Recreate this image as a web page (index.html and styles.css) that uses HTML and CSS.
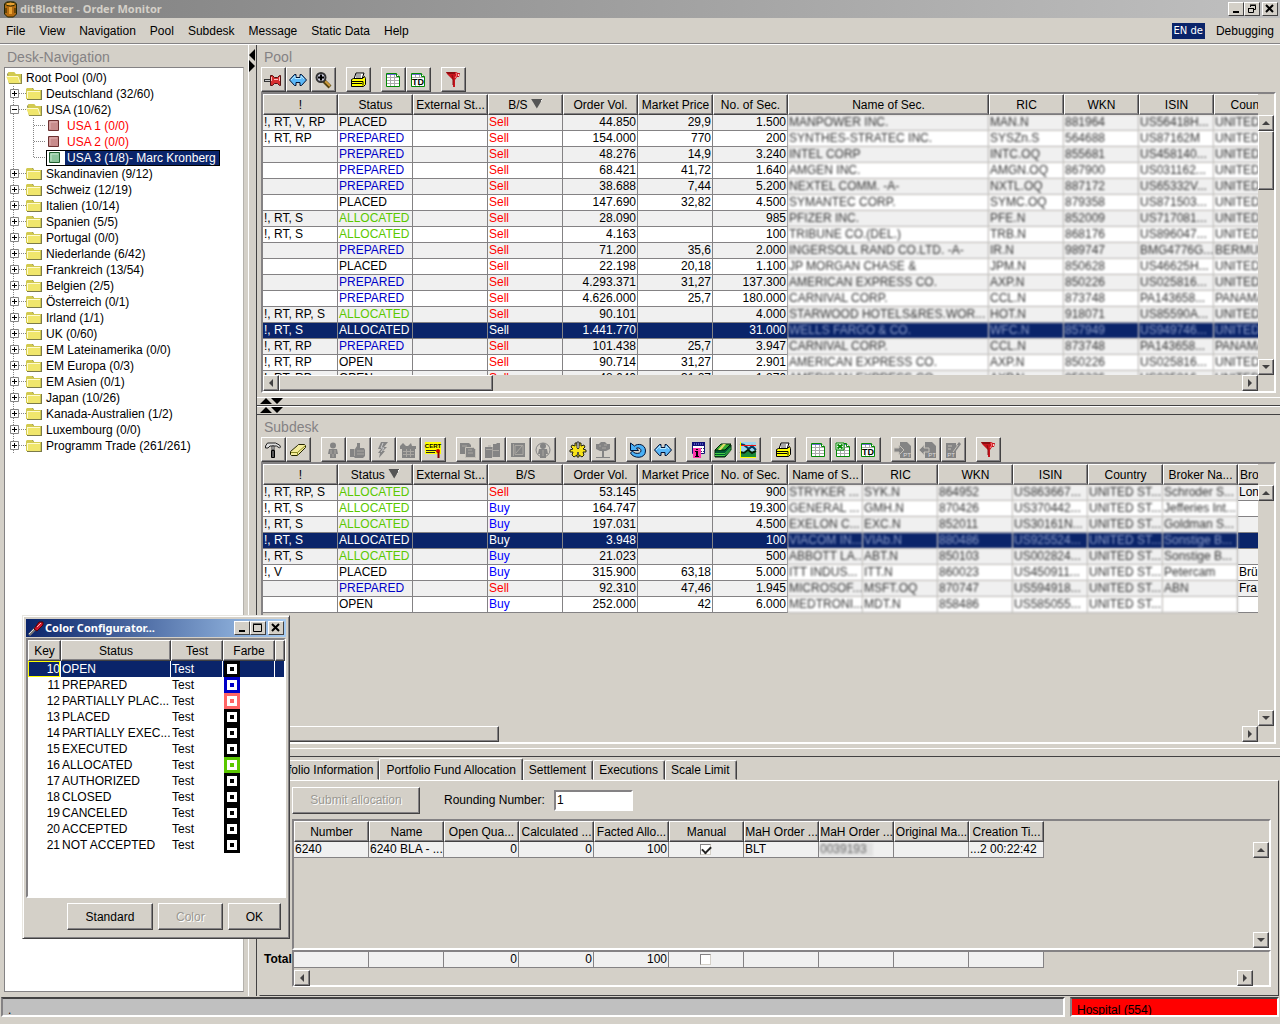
FILE: index.html
```html
<!DOCTYPE html>
<html lang="en">
<head>
<meta charset="utf-8">
<title>ditBlotter - Order Monitor</title>
<link rel="stylesheet" href="styles.css">
</head>
<body>
<svg class="defs" aria-hidden="true">
<defs>
<symbol id="i-pin" viewBox="0 0 18 18"><path d="M0 9.500h7" stroke="#333" stroke-width="3"/><path d="M1 9.500h6" stroke="#ccc"/><path d="M6.500 4.500h2l2 2h3l2-2h1v10h-1l-2-2h-3l-2 2h-2z" fill="#d83030" stroke="#511"/><path d="M7 6h1v4H7zM10 8h4v1h-4zM15 6h1v4h-1z" fill="#fbb"/></symbol>
<symbol id="i-arrows" viewBox="0 0 18 18"><path d="M0.500 9l5-5.500h1.500v3h4v-3h1.500l5 5.500-5 5.500H11v-3H7v3H5.500z" fill="#5cb8f8" stroke="#013"/><path d="M2 9l4-4v2.500h6V5l3 3" fill="none" stroke="#b8e8ff"/></symbol>
<symbol id="i-zoom" viewBox="0 0 18 18"><path d="M10 10l6 6" stroke="#541" stroke-width="4"/><path d="M11 10l5 5" stroke="#cc9a3c" stroke-width="2"/><circle cx="7" cy="6.500" r="4.500" fill="#ccd" stroke="#333" stroke-width="2"/><path d="M4 6.500h6M7 3.500v6" stroke="#000" stroke-width="2"/></symbol>
<symbol id="i-print" viewBox="0 0 18 18"><path d="M5 8l2-6h8l-2 6" fill="#fff" stroke="#000"/><path d="M7 4h5M7 6h5" stroke="#555"/><path d="M2.500 8.500l2-1h9l2-2 1 2v6l-2 2h-12z" fill="#ff0" stroke="#000"/><path d="M3 10.500h11v4M3 12.500h10" stroke="#000" fill="none"/></symbol>
<symbol id="i-sheet" viewBox="0 0 18 18"><path d="M2.500 2.500h10l3 3v10h-13z" fill="#fff" stroke="#080"/><path d="M3 6.500h12M3 9.500h12M3 12.500h12M6.500 3v12M10.500 3v12" stroke="#aaa"/><path d="M3 3.500h9" stroke="#66c"/><path d="M12.500 2.500v3h3" fill="#fff" stroke="#080"/></symbol>
<symbol id="i-td" viewBox="0 0 18 18"><use href="#i-sheet"/><path d="M3 7h12v7H3z" fill="#fff"/><text x="9" y="14" text-anchor="middle" font-size="9" font-weight="bold" font-family="Liberation Sans, sans-serif">TD</text></symbol>
<symbol id="i-xls" viewBox="0 0 18 18"><use href="#i-sheet"/><path d="M2 2h8v7H2z" fill="#fff" stroke="#080"/><path d="M3.500 3.500l5 4M8.500 3.500l-5 4" stroke="#080" stroke-width="2"/></symbol>
<symbol id="i-funnel" viewBox="0 0 18 18"><path d="M2 1h10l2 1h2l-1 4h-2l-2 3v7H9V9L3 3z" fill="#c8141c"/><path d="M2 1h9v2H4z" fill="#8c0c10"/><path d="M8 4l1 4v6" fill="none" stroke="#8c0c10"/><path d="M12 2l1 2-2 3" fill="none" stroke="#f88"/><path d="M14 3h1v2h-1z" fill="#fcc"/></symbol>
<symbol id="i-hammer" viewBox="0 0 18 18"><path d="M1.500 5l2-3h8l4 2 1 2-1 1-3-2H6L4 7H1.500z" fill="#ddd" stroke="#222"/><path d="M8 5h2v4H8z" fill="#eee" stroke="#333"/><path d="M7.500 9.500h3v7h-3z" fill="#555" stroke="#000"/></symbol>
<symbol id="i-eraser" viewBox="0 0 18 18"><path d="M1.500 10.500l7-6 1-1h6l1 1v2l-7 7-1 1h-6l-1-1z" fill="#f4ec9c" stroke="#220"/><path d="M2 11.500h6.500l8-7M8.500 11.500v3" stroke="#882" fill="none"/></symbol>
<symbol id="i-person" viewBox="0 0 18 18"><circle cx="9" cy="4.500" r="3"/><path d="M5 8h8l1 5h-2v4H6v-4H4z"/><path d="M7 9v4M11 9v4M9 13v3" stroke="#aaa7a2"/></symbol>
<symbol id="i-thumb" viewBox="0 0 18 18"><path d="M1 8h5l2-3V2h3v5h4l1 2v6l-2 2H6l-1-1H1z"/><path d="M5.500 8v7M8 10h7M8 13h7" stroke="#aaa7a2" fill="none"/></symbol>
<symbol id="i-bolt" viewBox="0 0 18 18"><path d="M7 1h7l-4 5h3l-4 4h2l-6 7 1-5H4l3-4H4z"/><path d="M9 2L7 7h3l-3 4" stroke="#ccc" fill="none"/></symbol>
<symbol id="i-factory" viewBox="0 0 18 18"><path d="M1 5l3-3 3 3h2l3-3 1 3h4v3h-1v9H3V8H1z"/><path d="M4 10.500h11M4 13.500h11M7.500 8v8M11.500 8v8" stroke="#aaa7a2"/></symbol>
<symbol id="i-cert" viewBox="0 0 18 18"><path d="M1 1h16v12H1z" fill="#ff0"/><text x="9" y="7" text-anchor="middle" font-size="6" font-weight="bold" fill="#000" font-family="Liberation Sans, sans-serif">CERT</text><path d="M2 9.500h10M2 11.500h9" stroke="#222"/><circle cx="14" cy="10" r="2" fill="#c00"/><path d="M14.500 11v6" stroke="#800" stroke-width="2"/></symbol>
<symbol id="i-copy" viewBox="0 0 18 18"><path d="M1 2h9l2 2v9H1z"/><path d="M6.500 6.500h8l2 2v8h-10z" stroke="#c4c0b8"/><path d="M3 5h5M9 9h4M9 12h5" stroke="#aaa7a2"/></symbol>
<symbol id="i-cases" viewBox="0 0 18 18"><path d="M1 6h8V3h3l1-1h3v14H8v1H1z"/><path d="M2 8.500h6M8.500 6v10M9 9.500h6M4 5h3" stroke="#aaa7a2"/></symbol>
<symbol id="i-book" viewBox="0 0 18 18"><path d="M2 2h14v14H2z"/><path d="M4.500 3v12M6 4.500h8v9H6zM7 12l6-7" stroke="#aaa7a2" fill="none"/></symbol>
<symbol id="i-globe" viewBox="0 0 18 18"><circle cx="9" cy="9" r="7" fill="none" stroke="#848484"/><circle cx="9" cy="5" r="3"/><path d="M5 8h8l1 5h-2v4H6v-4H4z"/><path d="M9 9v6" stroke="#aaa7a2"/></symbol>
<symbol id="i-gear" viewBox="0 0 18 18"><path d="M6 2h2v3h2V2h2v3l3-1 1 2-2 2 3 1v2l-3 0 1 3-2 2-3-2v2H8v-2l-3 2-2-2 1-3H1V9l3-1-2-2 1-2 3 1z" fill="#f8e418" stroke="#221"/><path d="M8 1h2v6l-1 1-1-1z" fill="#fff" stroke="#333"/><path d="M8 11h2v3H8z" fill="#554"/></symbol>
<symbol id="i-tree" viewBox="0 0 18 18"><path d="M7 1h4l2 2h3v5l-4 2H6L2 8V3h3z"/><path d="M8 10h2v6h6v1H2v-1h6z"/><path d="M5 5h2M10 4h3M8 7h4" stroke="#aaa7a2"/></symbol>
<symbol id="i-undo" viewBox="0 0 18 18"><path d="M1.500 2v7.500h8L7.500 7c4-1 6 3 3 5-3 1-6 0-7-2l-2 2c3 6 15 6 15-2 0-7-8-8-11-5z" fill="#4ab0f6" stroke="#013"/></symbol>
<symbol id="i-info" viewBox="0 0 18 18"><path d="M3.500 1.500h12v11h-12z" fill="#fff" stroke="#117"/><path d="M3 1h13v4H3z" fill="#117"/><path d="M5 3h9" stroke="#99f" stroke-dasharray="1 1"/><path d="M5 7.500h10M5 10.500h10" stroke="#336" stroke-dasharray="2 1"/><path d="M4 7h8v10H4z" fill="#f3a"/><path d="M7 8h2v1H7zM6 10h3v5h1v1H6v-1h1v-4H6z"/></symbol>
<symbol id="i-money" viewBox="0 0 18 18"><path d="M1 9l6-5h10v5l-6 7H1z" fill="#053" stroke="#020"/><path d="M1 12.500h10l6-6M1 14.500h10l6-6" stroke="#4c4" fill="none"/><path d="M7 3h10l-6 6H1z" fill="#3a3" stroke="#020"/><path d="M9 3l3 0-5 6H4z" fill="#dd6"/></symbol>
<symbol id="i-chart" viewBox="0 0 18 18"><path d="M1 1h16v15H1z" fill="#9cd4ec"/><path d="M1 11l4 2 4-3 4 3 4-2v5H1z" fill="#1a8a3a"/><path d="M1 3l4 1 5 4 3-3 4 4" fill="none" stroke="#013a60" stroke-width="2"/><path d="M1 11l4 1 4-3 4 3 4-2" fill="none" stroke="#020" stroke-width="2"/><path d="M1 4.500h16" stroke="#e11"/><path d="M1.500 1v15.500H17" stroke="#ff0" fill="none"/></symbol>
<symbol id="i-ptin" viewBox="0 0 18 18"><path d="M6 1h7l4 4v12H6z"/><path d="M0 7h5V4l5 5-5 5v-3H0z" stroke="#c4c0b8"/><text x="13" y="16" text-anchor="middle" font-size="6" fill="#ddd" font-family="Liberation Sans, sans-serif">PT</text></symbol>
<symbol id="i-ptout" viewBox="0 0 18 18"><path d="M6 1h7l4 4v12H6z"/><path d="M10 7H5V4L0 9l5 5v-3h5z" stroke="#c4c0b8"/><text x="13" y="16" text-anchor="middle" font-size="6" fill="#ddd" font-family="Liberation Sans, sans-serif">PT</text></symbol>
<symbol id="i-ptedit" viewBox="0 0 18 18"><path d="M2 2h10v3l3-4 2 2-5 7v7H2z"/><path d="M4 5h4M4 8h3M14 4l-5 7" stroke="#c4c0b8"/><text x="7" y="16" text-anchor="middle" font-size="6" fill="#ddd" font-family="Liberation Sans, sans-serif">PT</text></symbol>
<symbol id="i-plus" viewBox="0 0 20 16"><path d="M7.500 0v16M13 7.500h7" stroke="#848484" stroke-dasharray="1 1"/><path d="M4.500 3.500h8v8h-8z" fill="#fff" stroke="#848484"/><path d="M6 7.500h5M8.500 5v5" stroke="#000"/></symbol>
<symbol id="i-minus" viewBox="0 0 20 16"><path d="M7.500 0v16M13 7.500h7" stroke="#848484" stroke-dasharray="1 1"/><path d="M4.500 3.500h8v8h-8z" fill="#fff" stroke="#848484"/><path d="M6 7.500h5" stroke="#000"/></symbol>
<symbol id="i-line" viewBox="0 0 20 16"><path d="M7.500 0v16" stroke="#848484" stroke-dasharray="1 1"/></symbol>
<symbol id="i-branch" viewBox="0 0 20 16"><path d="M7.500 0v16M8 7.500h12" stroke="#848484" stroke-dasharray="1 1"/></symbol>
<symbol id="i-corner" viewBox="0 0 20 16"><path d="M7.500 0v8M8 7.500h12" stroke="#848484" stroke-dasharray="1 1"/></symbol>
<symbol id="i-folder" viewBox="0 0 16 16"><path d="M1 4l1-2h5l1 2h8v10H1z" fill="#7b7a4a"/><path d="M0 3l1-1h5l2 2h7v9H0z" fill="#d2ca50"/><path d="M1 5h13v8H1z" fill="#f0e66c"/><path d="M1 5.500h13M1.500 5v7" stroke="#fffbd0"/></symbol>
<symbol id="i-open" viewBox="0 0 16 16"><path d="M1 4l2-2h5l1 2h7v10H3z" fill="#8b8a4a"/><path d="M2 3l1-1h5l2 2h5v9H3z" fill="#d2ca50"/><path d="M0 6h12l2 7H3z" fill="#f0e66c"/><path d="M0 6.500h12l2 6" fill="none" stroke="#fffbd0"/></symbol>
<symbol id="i-red" viewBox="0 0 18 14"><path d="M1.500 1.500h10v10h-10z" fill="#c88c8c" stroke="#6b3030"/><path d="M3 3h7M3 3v7" stroke="#e2b4b4"/></symbol>
<symbol id="i-green" viewBox="0 0 18 14"><path d="M2.500 1.500h10v10h-10z" fill="#8cc49c" stroke="#206030"/><path d="M4 3h7M4 3v7" stroke="#c4e6cc"/></symbol>
<symbol id="i-pair" viewBox="0 0 24 7"><path d="M0 6l6-6 6 6zM11 0h12l-6 6z"/></symbol>
</defs>
</svg>

<header class="titlebar">
<svg width="18" height="18" viewBox="0 0 18 18"><path d="M3.500 4l2-2h8l2 2v10l-3 3h-6l-3-3z" fill="#b26a10" stroke="#220"/><ellipse cx="9.500" cy="4" rx="5" ry="2" fill="#e8a030" stroke="#220"/><path d="M5 8v5M14 8v5" stroke="#220"/><path d="M8 7h3v7H8z" fill="#e8a030"/></svg>
<h1>ditBlotter - Order Monitor</h1>
<div class="winbtns">
<button aria-label="Minimize"><svg width="12" height="10"><path d="M3 8h6" stroke="#000" stroke-width="2"/></svg></button><button aria-label="Restore"><svg width="12" height="10"><path d="M4.500 3V1.500h5v4H8M4 1h6M2.500 4.500h5v4h-5zM2 4.500h6" fill="none" stroke="#000"/></svg></button><button class="close" aria-label="Close"><svg width="12" height="10"><path d="M2 1l7 7M9 1L2 8" stroke="#000" stroke-width="2"/></svg></button>
</div>
</header>

<nav class="menubar">
<button>File</button><button>View</button><button>Navigation</button><button>Pool</button><button>Subdesk</button><button>Message</button><button>Static Data</button><button>Help</button>
<button class="lang">EN de</button><button class="debug">Debugging</button>
</nav>

<main class="work">
<section class="desk">
<h2>Desk-Navigation</h2>
<ul class="tree">
<li><svg class="ic16"><use href="#i-open"/></svg><span>Root Pool (0/0)</span></li>
<li><button aria-label="Expand"><svg><use href="#i-plus"/></svg></button><svg class="ic16"><use href="#i-folder"/></svg><span>Deutschland (32/60)</span></li>
<li><button aria-label="Collapse"><svg><use href="#i-minus"/></svg></button><svg class="ic16"><use href="#i-open"/></svg><span>USA (10/62)</span></li>
<li class="leaf"><svg class="guide"><use href="#i-line"/></svg><svg class="guide"><use href="#i-branch"/></svg><a href="#usa1"><svg><use href="#i-red"/></svg><b>USA 1 (0/0)</b></a></li>
<li class="leaf"><svg class="guide"><use href="#i-line"/></svg><svg class="guide"><use href="#i-branch"/></svg><a href="#usa2"><svg><use href="#i-red"/></svg><b>USA 2 (0/0)</b></a></li>
<li class="leaf"><svg class="guide"><use href="#i-line"/></svg><svg class="guide"><use href="#i-corner"/></svg><a class="current" href="#usa3"><svg><use href="#i-green"/></svg><b>USA 3 (1/8)- Marc Kronberg</b></a></li>
<li><button aria-label="Expand"><svg><use href="#i-plus"/></svg></button><svg class="ic16"><use href="#i-folder"/></svg><span>Skandinavien (9/12)</span></li>
<li><button aria-label="Expand"><svg><use href="#i-plus"/></svg></button><svg class="ic16"><use href="#i-folder"/></svg><span>Schweiz (12/19)</span></li>
<li><button aria-label="Expand"><svg><use href="#i-plus"/></svg></button><svg class="ic16"><use href="#i-folder"/></svg><span>Italien (10/14)</span></li>
<li><button aria-label="Expand"><svg><use href="#i-plus"/></svg></button><svg class="ic16"><use href="#i-folder"/></svg><span>Spanien (5/5)</span></li>
<li><button aria-label="Expand"><svg><use href="#i-plus"/></svg></button><svg class="ic16"><use href="#i-folder"/></svg><span>Portugal (0/0)</span></li>
<li><button aria-label="Expand"><svg><use href="#i-plus"/></svg></button><svg class="ic16"><use href="#i-folder"/></svg><span>Niederlande (6/42)</span></li>
<li><button aria-label="Expand"><svg><use href="#i-plus"/></svg></button><svg class="ic16"><use href="#i-folder"/></svg><span>Frankreich (13/54)</span></li>
<li><button aria-label="Expand"><svg><use href="#i-plus"/></svg></button><svg class="ic16"><use href="#i-folder"/></svg><span>Belgien (2/5)</span></li>
<li><button aria-label="Expand"><svg><use href="#i-plus"/></svg></button><svg class="ic16"><use href="#i-folder"/></svg><span>Österreich (0/1)</span></li>
<li><button aria-label="Expand"><svg><use href="#i-plus"/></svg></button><svg class="ic16"><use href="#i-folder"/></svg><span>Irland (1/1)</span></li>
<li><button aria-label="Expand"><svg><use href="#i-plus"/></svg></button><svg class="ic16"><use href="#i-folder"/></svg><span>UK (0/60)</span></li>
<li><button aria-label="Expand"><svg><use href="#i-plus"/></svg></button><svg class="ic16"><use href="#i-folder"/></svg><span>EM Lateinamerika (0/0)</span></li>
<li><button aria-label="Expand"><svg><use href="#i-plus"/></svg></button><svg class="ic16"><use href="#i-folder"/></svg><span>EM Europa (0/3)</span></li>
<li><button aria-label="Expand"><svg><use href="#i-plus"/></svg></button><svg class="ic16"><use href="#i-folder"/></svg><span>EM Asien (0/1)</span></li>
<li><button aria-label="Expand"><svg><use href="#i-plus"/></svg></button><svg class="ic16"><use href="#i-folder"/></svg><span>Japan (10/26)</span></li>
<li><button aria-label="Expand"><svg><use href="#i-plus"/></svg></button><svg class="ic16"><use href="#i-folder"/></svg><span>Kanada-Australien (1/2)</span></li>
<li><button aria-label="Expand"><svg><use href="#i-plus"/></svg></button><svg class="ic16"><use href="#i-folder"/></svg><span>Luxembourg (0/0)</span></li>
<li><button aria-label="Expand"><svg><use href="#i-plus"/></svg></button><svg class="ic16"><use href="#i-folder"/></svg><span>Programm Trade (261/261)</span></li>
</ul>
</section>
<div class="vsplit"><svg width="7" height="24"><path d="M6 0v12L0 6zM0 11v12l6-6z"/></svg></div>

<div class="right">
<section class="pane">
<h2>Pool</h2>
<div class="toolbar">
<div><button aria-label="Pin"><svg><use href="#i-pin"/></svg></button><button aria-label="Fit"><svg><use href="#i-arrows"/></svg></button><button aria-label="Zoom"><svg><use href="#i-zoom"/></svg></button></div>
<div><button aria-label="Print"><svg><use href="#i-print"/></svg></button></div>
<div><button aria-label="Table"><svg><use href="#i-sheet"/></svg></button><button aria-label="Table details"><svg><use href="#i-td"/></svg></button></div>
<div><button aria-label="Filter"><svg><use href="#i-funnel"/></svg></button></div>
</div>
<div class="box">
<div class="view">
<table class="orders pool">
<colgroup><col span="7"><col class="wide"><col span="4"></colgroup>
<thead><tr><th>!<th>Status<th>External St...<th>B/S <i class="sort"></i><th>Order Vol.<th>Market Price<th>No. of Sec.<th>Name of Sec.<th>RIC<th>WKN<th>ISIN<th>Country</tr></thead>
<tbody>
<tr><td>!, RT, V, RP<td>PLACED<td><td class="s">Sell<td>44.850<td>29,9<td>1.500<td>MANPOWER INC.<td>MAN.N<td>881964<td>US56418H...<td>UNITED
<tr><td>!, RT, RP<td class="p">PREPARED<td><td class="s">Sell<td>154.000<td>770<td>200<td>SYNTHES-STRATEC INC.<td>SYSZn.S<td>564688<td>US87162M<td>UNITED
<tr><td><td class="p">PREPARED<td><td class="s">Sell<td>48.276<td>14,9<td>3.240<td>INTEL CORP<td>INTC.OQ<td>855681<td>US458140...<td>UNITED
<tr><td><td class="p">PREPARED<td><td class="s">Sell<td>68.421<td>41,72<td>1.640<td>AMGEN INC.<td>AMGN.OQ<td>867900<td>US031162...<td>UNITED
<tr><td><td class="p">PREPARED<td><td class="s">Sell<td>38.688<td>7,44<td>5.200<td>NEXTEL COMM. -A-<td>NXTL.OQ<td>887172<td>US65332V...<td>UNITED
<tr><td><td>PLACED<td><td class="s">Sell<td>147.690<td>32,82<td>4.500<td>SYMANTEC CORP.<td>SYMC.OQ<td>879358<td>US871503...<td>UNITED
<tr><td>!, RT, S<td class="a">ALLOCATED<td><td class="s">Sell<td>28.090<td><td>985<td>PFIZER INC.<td>PFE.N<td>852009<td>US717081...<td>UNITED
<tr><td>!, RT, S<td class="a">ALLOCATED<td><td class="s">Sell<td>4.163<td><td>100<td>TRIBUNE CO.(DEL.)<td>TRB.N<td>868176<td>US896047...<td>UNITED
<tr><td><td class="p">PREPARED<td><td class="s">Sell<td>71.200<td>35,6<td>2.000<td>INGERSOLL RAND CO.LTD. -A-<td>IR.N<td>989747<td>BMG4776G...<td>BERMUDA
<tr><td><td>PLACED<td><td class="s">Sell<td>22.198<td>20,18<td>1.100<td>JP MORGAN CHASE &amp;<td>JPM.N<td>850628<td>US46625H...<td>UNITED
<tr><td><td class="p">PREPARED<td><td class="s">Sell<td>4.293.371<td>31,27<td>137.300<td>AMERICAN EXPRESS CO.<td>AXP.N<td>850226<td>US025816...<td>UNITED
<tr><td><td class="p">PREPARED<td><td class="s">Sell<td>4.626.000<td>25,7<td>180.000<td>CARNIVAL CORP.<td>CCL.N<td>873748<td>PA143658...<td>PANAMA
<tr><td>!, RT, RP, S<td class="a">ALLOCATED<td><td class="s">Sell<td>90.101<td><td>4.000<td>STARWOOD HOTELS&amp;RES.WOR...<td>HOT.N<td>918071<td>US85590A...<td>UNITED
<tr class="sel"><td>!, RT, S<td>ALLOCATED<td><td>Sell<td>1.441.770<td><td>31.000<td>WELLS FARGO &amp; CO.<td>WFC.N<td>857949<td>US949746...<td>UNITED
<tr><td>!, RT, RP<td class="p">PREPARED<td><td class="s">Sell<td>101.438<td>25,7<td>3.947<td>CARNIVAL CORP.<td>CCL.N<td>873748<td>PA143658...<td>PANAMA
<tr><td>!, RT, RP<td>OPEN<td><td class="s">Sell<td>90.714<td>31,27<td>2.901<td>AMERICAN EXPRESS CO.<td>AXP.N<td>850226<td>US025816...<td>UNITED
<tr><td>!, RT, RP<td>OPEN<td><td class="s">Sell<td>48.640<td>31,27<td>1.876<td>AMERICAN EXPRESS CO.<td>AXP.N<td>850226<td>US025816...<td>UNITED
</tbody></table>
</div>
<div class="vbar"><button class="up" aria-label="Scroll up"></button><span class="thumb tall"></span><button class="down" aria-label="Scroll down"></button></div>
<div class="hbar"><button class="left" aria-label="Scroll left"></button><span class="thumb mid"></span><button class="rt" aria-label="Scroll right"></button></div>
</div>
</section>
<div class="hsplit"><svg><use href="#i-pair"/></svg></div>
<div class="hsplit"><svg><use href="#i-pair"/></svg></div>
<section class="pane">
<h2>Subdesk</h2>
<div class="toolbar">
<div><button aria-label="Tools"><svg><use href="#i-hammer"/></svg></button><button aria-label="Erase"><svg><use href="#i-eraser"/></svg></button></div>
<div><button disabled aria-label="Assign"><svg><use href="#i-person"/></svg></button><button disabled aria-label="Approve"><svg><use href="#i-thumb"/></svg></button><button disabled aria-label="Execute"><svg><use href="#i-bolt"/></svg></button><button disabled aria-label="Broker"><svg><use href="#i-factory"/></svg></button><button aria-label="Certificate"><svg><use href="#i-cert"/></svg></button></div>
<div><button disabled aria-label="Copy"><svg><use href="#i-copy"/></svg></button><button disabled aria-label="Cases"><svg><use href="#i-cases"/></svg></button><button disabled aria-label="Book"><svg><use href="#i-book"/></svg></button><button disabled aria-label="Trader"><svg><use href="#i-globe"/></svg></button></div>
<div><button aria-label="Settings"><svg><use href="#i-gear"/></svg></button><button disabled aria-label="Tree"><svg><use href="#i-tree"/></svg></button></div>
<div><button aria-label="Undo"><svg><use href="#i-undo"/></svg></button><button aria-label="Fit"><svg><use href="#i-arrows"/></svg></button></div>
<div><button aria-label="Information"><svg><use href="#i-info"/></svg></button><button aria-label="Money"><svg><use href="#i-money"/></svg></button><button aria-label="Chart"><svg><use href="#i-chart"/></svg></button></div>
<div><button aria-label="Print"><svg><use href="#i-print"/></svg></button></div>
<div><button aria-label="Table"><svg><use href="#i-sheet"/></svg></button><button aria-label="Excel"><svg><use href="#i-xls"/></svg></button><button aria-label="Table details"><svg><use href="#i-td"/></svg></button></div>
<div><button disabled aria-label="PT in"><svg><use href="#i-ptin"/></svg></button><button disabled aria-label="PT out"><svg><use href="#i-ptout"/></svg></button><button disabled aria-label="PT edit"><svg><use href="#i-ptedit"/></svg></button></div>
<div><button aria-label="Filter"><svg><use href="#i-funnel"/></svg></button></div>
</div>
<div class="box">
<div class="view">
<table class="orders sub">
<colgroup><col span="14"></colgroup>
<thead><tr><th>!<th>Status <i class="sort"></i><th>External St...<th>B/S<th>Order Vol.<th>Market Price<th>No. of Sec.<th>Name of S...<th>RIC<th>WKN<th>ISIN<th>Country<th>Broker Na...<th class="cut">Bro</tr></thead>
<tbody>
<tr><td>!, RT, RP, S<td class="a">ALLOCATED<td><td class="s">Sell<td>53.145<td><td>900<td>STRYKER ...<td>SYK.N<td>864952<td>US863667...<td>UNITED ST...<td>Schroder S...<td>Lon
<tr><td>!, RT, S<td class="a">ALLOCATED<td><td class="b">Buy<td>164.747<td><td>19.300<td>GENERAL ...<td>GMH.N<td>870426<td>US370442...<td>UNITED ST...<td>Jefferies Int...<td>
<tr><td>!, RT, S<td class="a">ALLOCATED<td><td class="b">Buy<td>197.031<td><td>4.500<td>EXELON C...<td>EXC.N<td>852011<td>US30161N...<td>UNITED ST...<td>Goldman S...<td>
<tr class="sel"><td>!, RT, S<td>ALLOCATED<td><td>Buy<td>3.948<td><td>100<td>VIACOM IN...<td>VIAb.N<td>880486<td>US925524...<td>UNITED ST...<td>Sonstige B...<td>
<tr><td>!, RT, S<td class="a">ALLOCATED<td><td class="b">Buy<td>21.023<td><td>500<td>ABBOTT LA...<td>ABT.N<td>850103<td>US002824...<td>UNITED ST...<td>Sonstige B...<td>
<tr><td>!, V<td>PLACED<td><td class="b">Buy<td>315.900<td>63,18<td>5.000<td>ITT INDUS...<td>ITT.N<td>860023<td>US450911...<td>UNITED ST...<td>Petercam<td>Brü
<tr><td><td class="p">PREPARED<td><td class="s">Sell<td>92.310<td>47,46<td>1.945<td>MICROSOF...<td>MSFT.OQ<td>870747<td>US594918...<td>UNITED ST...<td>ABN<td>Fra
<tr><td><td>OPEN<td><td class="b">Buy<td>252.000<td>42<td>6.000<td>MEDTRONI...<td>MDT.N<td>858486<td>US585055...<td>UNITED ST...<td><td>
</tbody></table>
</div>
<div class="vbar"><button class="up" aria-label="Scroll up"></button><button class="down" aria-label="Scroll down"></button></div>
<div class="hbar"><button class="left" aria-label="Scroll left"></button><span class="thumb long"></span><button class="rt" aria-label="Scroll right"></button></div>
</div>
</section>
<div class="hsplit"></div>
<section class="details">
<div class="tabs" role="tablist"><button role="tab">Portfolio Information</button><button role="tab" aria-selected="true">Portfolio Fund Allocation</button><button role="tab">Settlement</button><button role="tab">Executions</button><button role="tab">Scale Limit</button></div>
<div class="tabpanel">
<div class="form"><button class="push" disabled>Submit allocation</button><label for="round">Rounding Number:</label><input id="round" type="text" value="1"></div>
<div class="box alloc">
<div class="view">
<table class="orders">
<colgroup><col span="10"></colgroup>
<thead><tr><th>Number<th>Name<th>Open Qua...<th>Calculated ...<th>Facted Allo...<th>Manual<th>MaH Order ...<th>MaH Order ...<th>Original Ma...<th>Creation Ti...</tr></thead>
<tbody><tr><td>6240<td>6240 BLA - ...<td class="n">0<td class="n">0<td class="n">100<td class="c"><input type="checkbox" checked aria-label="Manual"><td>BLT<td class="veil"><span>0039193</span><td><td>...2 00:22:42</tbody>
</table>
</div>
<div class="vbar"><button class="up" aria-label="Scroll up"></button><button class="down" aria-label="Scroll down"></button></div>
</div>
<strong>Total</strong>
<div class="box total">
<div class="view">
<table class="orders">
<colgroup><col span="10"></colgroup>
<tbody><tr><td><td><td class="n">0<td class="n">0<td class="n">100<td class="c"><input type="checkbox" aria-label="Manual total"><td><td><td><td></tbody>
</table>
</div>
<div class="hbar"><button class="left" aria-label="Scroll left"></button><button class="rt" aria-label="Scroll right"></button></div>
</div>
</div>
</section>
</div>
</main>

<footer class="status"><div class="msg">.</div><div class="alert">Hospital (554)</div></footer>

<section class="dialog" role="dialog" aria-label="Color Configurator">
<header>
<svg width="16" height="16"><path d="M1 15l7-7" stroke="#777" stroke-width="3"/><path d="M1 14l7-7" stroke="#ddd"/><path d="M6 9l5-7 4 0 0 3-6 6z" fill="#d01830" stroke="#500"/><path d="M9 7l4-4" stroke="#fbb"/></svg>
<h2>Color Configurator...</h2>
<div class="winbtns">
<button aria-label="Minimize"><svg width="12" height="10"><path d="M3 8h6" stroke="#000" stroke-width="2"/></svg></button><button aria-label="Maximize"><svg width="12" height="10"><path d="M1.500 1.500h8v7h-8zM1 1h9" fill="none" stroke="#000"/></svg></button><button class="close" aria-label="Close"><svg width="12" height="10"><path d="M2 1l7 7M9 1L2 8" stroke="#000" stroke-width="2"/></svg></button>
</div>
</header>
<div class="colors">
<table>
<colgroup><col class="k"><col class="st"><col class="te"><col class="te"><col></colgroup>
<thead><tr><th>Key<th>Status<th>Test<th>Farbe<th></tr></thead>
<tbody>
<tr class="sel"><td>10<td>OPEN<td>Test<td><i></i><td>
<tr><td>11<td>PREPARED<td>Test<td><i class="blue"></i><td>
<tr><td>12<td>PARTIALLY PLAC...<td>Test<td><i class="pink"></i><td>
<tr><td>13<td>PLACED<td>Test<td><i></i><td>
<tr><td>14<td>PARTIALLY EXEC...<td>Test<td><i></i><td>
<tr><td>15<td>EXECUTED<td>Test<td><i></i><td>
<tr><td>16<td>ALLOCATED<td>Test<td><i class="lime"></i><td>
<tr><td>17<td>AUTHORIZED<td>Test<td><i></i><td>
<tr><td>18<td>CLOSED<td>Test<td><i></i><td>
<tr><td>19<td>CANCELED<td>Test<td><i></i><td>
<tr><td>20<td>ACCEPTED<td>Test<td><i></i><td>
<tr><td>21<td>NOT ACCEPTED<td>Test<td><i></i><td>
</tbody></table>
</div>
<div class="actions"><button class="push wide">Standard</button><button class="push" disabled>Color</button><button class="push">OK</button></div>
</section>
</body>
</html>
```
FILE: styles.css
```css
* { box-sizing: border-box; }

:root {
  --face: #d4d0c8;
  --shade: #848284;
  --dark: #424142;
  --navy: #0a246a;
}

body {
  margin: 0;
  height: 100vh;
  display: flex;
  flex-direction: column;
  overflow: hidden;
  background: var(--face);
  color: #000;
  font: 12px/16px "Liberation Sans", Arial, sans-serif;
}

button {
  margin: 0;
  padding: 0;
  border: 0;
  background: var(--face);
  color: inherit;
  font: inherit;
  white-space: nowrap;
}

h1, h2 { margin: 0; font-weight: normal; }
svg { display: block; flex: none; }
.defs { position: absolute; width: 0; height: 0; }

/* title bar */
.titlebar {
  display: flex;
  align-items: center;
  height: 18px;
  padding-left: 1px;
  background: linear-gradient(90deg, #808080, #c0c0c0);
}
.titlebar h1, .dialog h2 {
  flex: 1;
  font: bold 11px/16px "Noto Sans", Tahoma, sans-serif;
  color: var(--face);
}
.titlebar h1 { padding-left: 1px; }
.winbtns { display: flex; padding-right: 2px; }
.winbtns button {
  width: 16px;
  height: 14px;
  padding: 1px;
  border: 1px solid;
  border-color: #fff var(--dark) var(--dark) #fff;
}
.winbtns .close { margin-left: 2px; }

/* menu */
.menubar {
  display: flex;
  align-items: center;
  gap: 14px;
  height: 27px;
  padding: 0 6px;
  border-bottom: 1px solid #fff;
  box-shadow: inset 0 -1px var(--shade);
}
.menubar .lang {
  margin-left: auto;
  padding: 0 2px 0 1px;
  background: var(--navy);
  color: #fff;
  font: 10px/16px "DejaVu Sans", Verdana, sans-serif;
}
.menubar .debug { margin-left: -3px; }

/* work area */
.work { flex: 1; min-height: 0; display: flex; }
h2 { padding-left: 7px; color: var(--shade); font-size: 14px; line-height: 22px; }
.work h2 { height: 22px; padding-top: 1px; }

.desk { width: 248px; display: flex; flex-direction: column; padding-bottom: 4px; }
.tree {
  flex: 1;
  margin: 0 4px;
  padding: 2px 1px;
  list-style: none;
  background: #fff;
  border: 1px solid var(--shade);
  border-right-color: #b5b2ac;
}
.tree li { display: flex; height: 16px; white-space: nowrap; }
.tree li span { padding-left: 4px; }
.tree button { background: none; }
.tree button svg, .tree .guide { width: 20px; height: 16px; }
.ic16 { width: 16px; height: 16px; }
.tree a { display: flex; border: 1px solid transparent; color: #f00; text-decoration: none; line-height: 14px; }
.tree a svg { width: 18px; height: 14px; }
.tree a b { padding: 0 3px 0 2px; font-weight: normal; }
.tree a.current { border-color: #000; color: #fff; }
.tree a.current b { background: var(--navy); }

.vsplit { width: 9px; padding-top: 4px; border-left: 1px solid #fff; border-right: 1px solid var(--dark); }

.right {
  flex: 1;
  min-width: 0;
  display: grid;
  grid-template-columns: minmax(0, 1fr);
  grid-template-rows: minmax(0, 352fr) 9px 9px minmax(0, 333fr) 9px minmax(0, 239fr);
}
.hsplit { padding-left: 3px; border-top: 1px solid #fff; border-bottom: 1px solid var(--dark); }
.hsplit svg { width: 24px; height: 7px; }
.pane { display: flex; flex-direction: column; padding: 0 4px 4px; }
.pane h2 { padding-left: 3px; }

.toolbar { display: flex; gap: 10px; }
.toolbar div { display: flex; }
.toolbar button {
  width: 25px;
  height: 25px;
  padding: 2px;
  border: 1px solid;
  border-color: #fff var(--dark) var(--dark) #fff;
  box-shadow: inset -1px -1px var(--shade);
}
.toolbar svg { width: 18px; height: 18px; }
.toolbar button:disabled { fill: #848484; }

/* scrolled tables */
.box {
  flex: 1;
  min-height: 0;
  display: grid;
  grid-template-columns: minmax(0, 1fr) 16px;
  grid-template-rows: minmax(0, 1fr) 16px;
  border: 2px solid;
  border-color: var(--shade) #fff #fff var(--shade);
}
.view { overflow: hidden; }
.orders { table-layout: fixed; width: 0; border-spacing: 0; }
.orders col { width: 75px; }
.orders col.wide { width: 201px; }
th {
  height: 21px;
  padding: 0;
  overflow: hidden;
  background: var(--face);
  border: 1px solid;
  border-color: #fff var(--dark) var(--dark) #fff;
  box-shadow: inset -1px -1px var(--shade);
  font-weight: normal;
  line-height: 16px;
  white-space: nowrap;
}
th.cut { padding-left: 1px; text-align: left; }
.orders td {
  height: 16px;
  padding: 0 1px;
  overflow: hidden;
  background: #fff;
  border: solid var(--shade);
  border-width: 0 1px 1px 0;
  line-height: 15px;
  white-space: nowrap;
}
.orders tr:nth-child(odd) td { background: #f0f0f0; }
.orders tr.sel td { background: var(--navy); color: #fff; }
.pool td:nth-child(n+5):nth-child(-n+7),
.sub td:nth-child(n+5):nth-child(-n+7),
.orders .n { text-align: right; }
.pool td:nth-child(n+8),
.sub td:nth-child(n+8):nth-child(-n+13) { filter: blur(1px); color: #333; border-color: #b5b5b5; }
.pool tr.sel td:nth-child(n+8),
.sub tr.sel td:nth-child(n+8):nth-child(-n+13) { color: #8c9cc8; }
.veil span { display: inline-block; color: #666; background: #e2e2e2; padding-right: 6px; line-height: 13px; filter: blur(1px); }
.s { color: #f00; }
.b { color: #00f; }
.p { color: #0000c8; }
.a { color: #5ac800; }
.orders .c { padding-left: 29px; }
.sort {
  display: inline-block;
  width: 12px;
  height: 10px;
  background: linear-gradient(110deg, #555 70%, #fff 70%);
  clip-path: polygon(0 0, 100% 0, 50% 100%);
}

input[type="checkbox"] {
  appearance: none;
  display: block;
  width: 11px;
  height: 11px;
  margin: 1px 2px;
  background: #fff;
  border: 1px solid;
  border-color: var(--shade) var(--face) var(--face) var(--shade);
}
input[type="checkbox"]:checked::after {
  content: "";
  display: block;
  width: 7px;
  height: 4px;
  margin: 1px;
  border: solid #222;
  border-width: 0 0 2px 2px;
  transform: rotate(-45deg);
}

/* scroll bars */
.vbar { display: flex; flex-direction: column; margin-top: 21px; }
.hbar { display: flex; }
.vbar button, .hbar button, .thumb {
  width: 16px;
  height: 16px;
  background: var(--face);
  border: 1px solid;
  border-color: #fff var(--dark) var(--dark) #fff;
  box-shadow: inset -1px -1px var(--shade);
}
.vbar button::before, .hbar button::before {
  content: "";
  display: block;
  width: 8px;
  height: 8px;
  margin: auto;
  background: var(--dark);
}
.vbar .up::before { clip-path: polygon(50% 25%, 100% 75%, 0 75%); }
.vbar .down::before { clip-path: polygon(0 25%, 100% 25%, 50% 75%); }
.hbar .left::before { clip-path: polygon(25% 50%, 75% 0, 75% 100%); }
.hbar .rt::before { clip-path: polygon(75% 50%, 25% 0, 25% 100%); }
.vbar .down { margin-top: auto; }
.hbar .rt { margin-left: auto; }
.thumb.tall { height: 59px; }
.thumb.mid { width: 214px; }
.thumb.long { width: 220px; }

/* lower tabs */
.details { display: flex; flex-direction: column; padding: 1px 1px 0 2px; }
.tabs { display: flex; align-items: flex-end; height: 22px; padding-left: 1px; }
.tabs button {
  height: 20px;
  padding: 0 5px;
  border: 1px solid;
  border-color: #fff var(--dark) transparent #fff;
  border-radius: 2px 2px 0 0;
  box-shadow: inset -1px 0 var(--shade);
}
.tabs [aria-selected] { height: 23px; margin-bottom: -1px; padding: 0 6px; border-bottom: 0; }
.tabs [aria-selected] ~ button { padding: 0 6px 0 5px; }
.tabpanel {
  flex: 1;
  min-height: 0;
  display: grid;
  grid-template-columns: 28px minmax(0, 1fr);
  grid-template-rows: 38px minmax(0, 1fr) 37px;
  padding: 0 7px 8px 4px;
  border: 1px solid;
  border-color: #fff var(--dark) var(--dark) transparent;
}
.form { grid-column: 2; display: flex; align-items: center; }
.form .push { width: 128px; }
.form label { width: 134px; padding-left: 24px; }
.form input {
  width: 79px;
  height: 21px;
  padding: 0 1px;
  border: 2px solid;
  border-color: var(--shade) #fff #fff var(--shade);
  font: inherit;
}
.push {
  height: 27px;
  padding: 0 15px;
  border: 1px solid;
  border-color: #fff var(--dark) var(--dark) #fff;
  box-shadow: inset -1px -1px var(--shade);
}
.push:disabled { color: #9a9892; text-shadow: 1px 1px #fff; }
.alloc { grid-column: 2; grid-template-rows: minmax(0, 1fr); }
.total { grid-row: 3; grid-template-rows: 18px 16px; }
.total .view { grid-column: 1 / 3; }
.tabpanel strong { grid-row: 3; padding-top: 1px; }

/* status line */
.status { display: flex; gap: 5px; height: 28px; padding: 1px 1px 0 1px; }
.status div {
  height: 20px;
  overflow: hidden;
  border: 2px solid;
  border-color: var(--dark) #fff #fff var(--shade);
  line-height: 22px;
}
.status .msg { flex: 1; padding-left: 5px; background: #c0c0c0; }
.status .alert { width: 209px; padding-left: 5px; background: #f00; }

/* floating window */
.dialog {
  position: absolute;
  left: 22px;
  top: 615px;
  width: 268px;
  padding: 3px;
  background: var(--face);
  border: 1px solid;
  border-color: #e8e6e0 var(--dark) var(--dark) #e8e6e0;
  box-shadow: inset 1px 1px #fff, inset -1px -1px var(--shade);
}
.dialog header {
  display: flex;
  align-items: center;
  height: 18px;
  padding-left: 2px;
  background: linear-gradient(90deg, var(--navy), #a6caf0);
}
.dialog h2 { padding-left: 1px; color: #fff; }
.colors {
  height: 260px;
  margin-top: 1px;
  background: #fff;
  border: 2px solid;
  border-color: var(--shade) #fff #fff var(--shade);
}
.colors table { table-layout: fixed; width: 257px; border-spacing: 0; }
.k { width: 33px; }
.st { width: 110px; }
.te { width: 52px; }
.colors td { height: 16px; padding: 0 1px; overflow: hidden; border-right: 1px solid #fff; line-height: 15px; white-space: nowrap; }
.colors td:first-child { text-align: right; padding: 0; }
.colors .sel td { background: var(--navy); color: #fff; }
.colors .sel td:first-child { box-shadow: inset 0 0 0 1px #ff0; }
.colors i {
  display: block;
  width: 16px;
  height: 16px;
  color: #000;
  background: currentColor;
  border: 3px solid;
  box-shadow: inset 0 0 0 3px #fff;
}
.colors .blue { color: #0000c8; }
.colors .pink { color: #ff6464; }
.colors .lime { color: #5ac800; }
.actions { display: flex; justify-content: flex-end; gap: 5px; padding: 5px 5px 5px; }
.actions .push { min-width: 52px; padding: 0 17px; }
.actions .wide { min-width: 86px; }
```
